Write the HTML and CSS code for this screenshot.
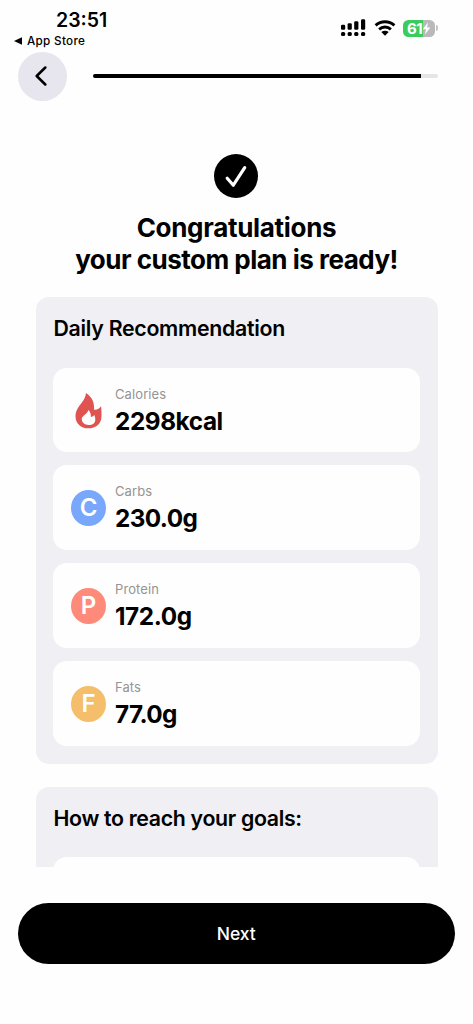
FILE: index.html
```html
<!DOCTYPE html>
<html lang="en">
<head>
<meta charset="utf-8">
<meta name="viewport" content="width=device-width, initial-scale=1">
<title>Your custom plan</title>
<link rel="stylesheet" href="styles.css">
</head>
<body>
<div class="screen">
  <header class="status">
    <div class="status-left">
      <div class="clock"><span>23:51</span></div>
      <div class="return-app">
        <svg width="8" height="8" viewBox="0 0 8 8"><path d="M0 4 8 0.2V7.8Z"/></svg>
        <span>App Store</span>
      </div>
    </div>
    <div class="status-right">
      <svg class="signal" width="25" height="18" viewBox="0 0 25 18">
        <rect x="0" y="5.8" width="4.2" height="5" rx="1.3"/><rect x="6.6" y="4.3" width="4.2" height="6.5" rx="1.3"/><rect x="13.2" y="2.3" width="4.2" height="8.5" rx="1.3"/><rect x="20" y="0.2" width="4.2" height="10.6" rx="1.3"/>
        <rect x="0" y="13" width="4.2" height="4" rx="1.5"/><rect x="6.6" y="13" width="4.2" height="4" rx="1.5"/><rect x="13.2" y="13" width="4.2" height="4" rx="1.5"/><rect x="20" y="13" width="4.2" height="4" rx="1.5"/>
      </svg>
      <svg class="wifi" width="22" height="16" viewBox="0 0 22 16">
        <path d="M1.6 5.4C7 .6 15 .6 20.4 5.4M5.1 9.300C8.5 6.300 13.500 6.300 16.900 9.300" fill="none" stroke="#000" stroke-width="2.900"/>
        <path d="M7.300 12C9.400 10.300 12.600 10.300 14.700 12L11 15.700Z"/>
      </svg>
      <div class="battery">
        <span>61</span>
        <svg width="9" height="13" viewBox="0 0 9 13"><path d="M6 0.500 0.800 7.200H4L3 12.500 8.300 5.500H5.100Z" fill="#fff"/></svg>
      </div>
      <i class="battery-tip"></i>
    </div>
  </header>

  <nav class="topbar">
    <button class="back" aria-label="Back">
      <svg width="12" height="20" viewBox="0 0 12 20"><path d="M10.300 1.500 1.700 10 10.300 18.500" fill="none" stroke="#000" stroke-width="2.500" stroke-linecap="round" stroke-linejoin="round"/></svg>
    </button>
    <div class="progress"><div class="progress-fill"></div></div>
  </nav>

  <main class="content">
    <section class="hero">
      <svg class="check" width="45" height="44" viewBox="0 0 45 44"><circle cx="22" cy="22" r="22"/><path d="M13.200 24.200 19.300 31.200 30.700 13.700" fill="none" stroke="#fff" stroke-width="3.200" stroke-linecap="round" stroke-linejoin="round"/></svg>
      <h1><span class="line-one">Congratulations</span><br><span class="line-two">your custom plan is ready!</span></h1>
    </section>

    <section class="panel">
      <h2 class="daily">Daily Recommendation</h2>
      <div class="cards">
        <article class="card">
          <div class="icon"><svg width="27" height="36" viewBox="0 0 27 36"><path fill="#df5450" fill-rule="evenodd" d="M11 0C10.300 6.300 6.600 9.500 3.400 14.200C1.300 17.300 0.500 20.300 0.500 23.200C0.500 30.700 5.900 35.300 13.200 35.300C20.800 35.300 26.500 30.800 26.500 23.200C26.500 19.800 26.500 16.300 26 13.300C24.200 15.900 22.300 17 19 16.700C19.700 9.800 16.800 3.600 11 0ZM13.200 16.900C15.500 18.800 16 21 15.900 23.900C17.300 23.700 18.500 23 19.300 22C20 23.500 20.300 25 20.300 26.400C20.300 30 17.700 32 13.700 32C9.700 32 6.800 29.800 6.800 26.100C6.800 22 12.700 21.500 13.200 16.900Z"/></svg></div>
          <div class="fact"><p class="label">Calories</p><p class="value">2298kcal</p></div>
        </article>
        <article class="card">
          <div class="icon badge carbs">C</div>
          <div class="fact"><p class="label">Carbs</p><p class="value decimal">230.0g</p></div>
        </article>
        <article class="card">
          <div class="icon badge protein">P</div>
          <div class="fact"><p class="label">Protein</p><p class="value">172.0g</p></div>
        </article>
        <article class="card">
          <div class="icon badge fats">F</div>
          <div class="fact"><p class="label">Fats</p><p class="value decimal">77.0g</p></div>
        </article>
      </div>
    </section>

    <section class="panel goals">
      <h2 class="reach">How to reach your goals:</h2>
      <div class="cards"><article class="card"></article></div>
    </section>
  </main>

  <footer class="actions"><button class="next"><span>Next</span></button></footer>
</div>
</body>
</html>
```
FILE: styles.css
```css
* { box-sizing: border-box; }
body { margin: 0; background: #fefefe; color: #000; font-family: Inter, "Liberation Sans", sans-serif; }
h1, h2, p { margin: 0; }
button { border: 0; padding: 0; font: inherit; }
svg { display: block; }
.screen { width: 473px; height: 1024px; overflow: hidden; display: flex; flex-direction: column; }

.status { height: 52px; display: flex; justify-content: space-between; padding: 8px 35px 0 14px; }
.clock { padding-left: 42px; font-size: 19.5px; line-height: 24px; font-weight: 600; }
.return-app { display: flex; align-items: center; gap: 5px; margin-top: 1px; font-size: 11.7px; line-height: 16px; font-weight: 500; letter-spacing: 0.3px; }
.status-right { display: flex; align-items: center; height: 40px; }
.wifi { margin-left: 8px; }
.battery { display: flex; align-items: center; margin-left: 7.5px; width: 32px; height: 17px; border-radius: 5.5px; padding-left: 4px; background: linear-gradient(90deg, #3ccb5d 61%, #b9b9bb 61%); color: #fff; font-size: 15px; font-weight: 700; letter-spacing: -0.6px; }
.battery-tip { width: 2px; height: 6px; margin-left: 1px; background: #c4c4c6; border-radius: 0 2px 2px 0; }

.topbar { height: 48px; display: flex; align-items: center; gap: 26px; padding: 0 35.5px 0 17.5px; }
.back { width: 49px; height: 49px; border-radius: 50%; background: #e7e6ee; display: grid; place-items: center; flex: none; padding-right: 3px; }
.progress { flex: 1; height: 4.6px; border-radius: 3px; background: #e5e5e6; overflow: hidden; }
.progress-fill { width: 95.3%; height: 100%; background: #000; }

.content { height: 767px; overflow: hidden; padding: 54px 35.5px 0; display: flex; flex-direction: column; }
.hero { height: 143px; flex: none; display: flex; flex-direction: column; align-items: center; }
h1 { margin-top: 14px; font-size: 26px; line-height: 32px; font-weight: 650; text-align: center; white-space: nowrap; }
.line-one { letter-spacing: -0.3px; }
.line-two { letter-spacing: -0.5px; }
.panel { flex: none; height: 467px; padding: 16.5px 17.5px 0; border-radius: 13px; background: #f0eff4; }
.goals { margin-top: 23px; }
h2 { padding-left: 0.5px; font-size: 21.3px; line-height: 28px; font-weight: 600; white-space: nowrap; }
.daily { letter-spacing: -0.28px; }
.reach { letter-spacing: -0.32px; }
.cards { display: flex; flex-direction: column; gap: 13.3px; margin-top: 26px; }
.goals .cards { margin-top: 25.5px; }
.card { height: 84.7px; flex: none; display: flex; gap: 9px; padding: 17px 18px 0; border-radius: 14px; background: #fefefe; }
.icon { width: 35px; height: 36px; margin-top: 8px; display: grid; place-items: center; flex: none; }
.badge { border-radius: 50%; color: #fff; font-size: 24px; line-height: 36px; font-weight: 600; }
.carbs { background: #78a7fb; }
.protein { background: #fe8b79; }
.fats { background: #f5be6a; }
.label { font-size: 13px; line-height: 18px; color: #949494; letter-spacing: 0.1px; }
.value { margin-top: 2px; font-size: 24.3px; line-height: 32px; font-weight: 700; letter-spacing: -0.4px; }
.decimal { letter-spacing: -0.6px; }

.actions { padding: 35.5px 18px 0 17.5px; }
.next { width: 100%; height: 61.5px; border-radius: 31px; background: #000; color: #fff; font-size: 17.5px; font-weight: 500; }
```
